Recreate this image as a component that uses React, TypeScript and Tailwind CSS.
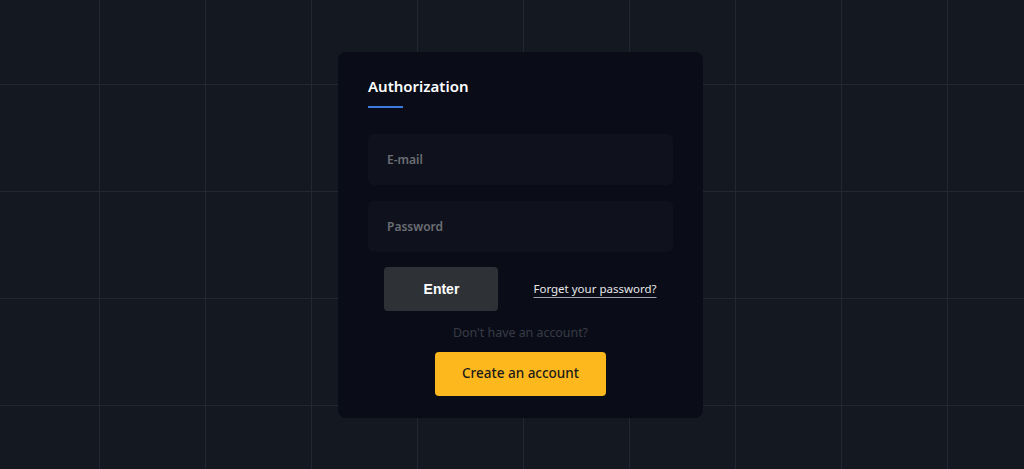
import { useState } from 'react';

// Login card on a dark grid backdrop
const App = () => {
    const [email, setEmail] = useState('');
    const [password, setPassword] = useState('');

    return (
        <div className="flex h-[469px] w-full items-center justify-center bg-[#141821] bg-[linear-gradient(to_right,#232731_1px,transparent_1px),linear-gradient(to_bottom,#232731_1px,transparent_1px)] bg-[size:106px_107px] bg-[position:99px_84px] pl-[17px] font-['Noto_Sans',sans-serif]">
            <div className="flex w-[365px] flex-col rounded-lg bg-[#0a0d18] px-[30px] pt-6 pb-[22px]">
                <h1 className="text-[15px] leading-5 font-semibold text-white">Authorization</h1>
                <div className="mt-2.5 h-[2px] w-[35px] bg-[#3b7be0]" />

                <form className="mt-[26px] flex flex-col gap-4" onSubmit={(e) => e.preventDefault()}>
                    <input
                        type="email"
                        value={email}
                        onChange={(e) => setEmail(e.target.value)}
                        placeholder="E-mail"
                        className="h-[51px] rounded-md bg-[#0f121c] px-[19px] text-xs font-semibold text-white outline-none placeholder:text-[#6b6e75]"
                    />
                    <input
                        type="password"
                        value={password}
                        onChange={(e) => setPassword(e.target.value)}
                        placeholder="Password"
                        className="h-[51px] rounded-md bg-[#0f121c] px-[19px] text-xs font-semibold text-white outline-none placeholder:text-[#6b6e75]"
                    />
                </form>

                <div className="mt-[15px] flex items-center justify-center gap-[35px]">
                    <button className="h-[44px] w-[114px] rounded bg-[#2e3237] font-['Liberation_Sans',sans-serif] text-sm font-bold text-white">
                        Enter
                    </button>
                    <a href="#" className="text-[11.5px] text-[#e8e8ea] underline decoration-[#a0a3aa] underline-offset-4">
                        Forget your password?
                    </a>
                </div>

                <p className="mt-3.5 text-center text-[12.4px] leading-4 text-[#383b45]">Don't have an account?</p>

                <button className="mx-auto mt-[11px] h-[44px] w-[171px] rounded bg-[#fdb81e] text-[13.5px] font-medium text-[#1a1a1a]">
                    Create an account
                </button>
            </div>
        </div>
    );
};

export default App;
